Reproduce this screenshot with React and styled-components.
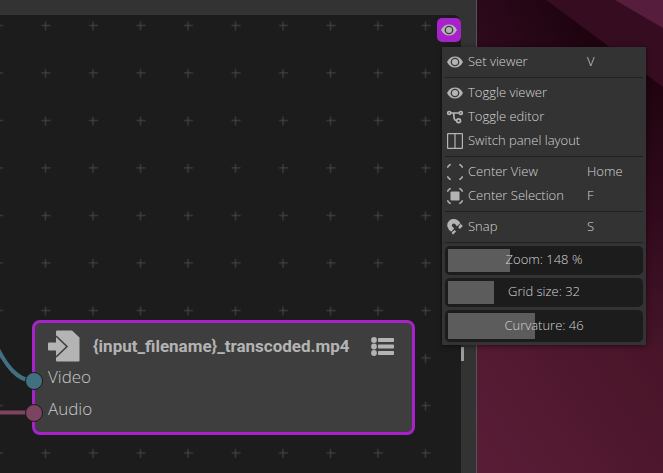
import React, { useState } from 'react';
import styled, { createGlobalStyle } from 'styled-components';

const GlobalStyle = createGlobalStyle`
  * {
    box-sizing: border-box;
  }
  body {
    margin: 0;
    background: #1c1c1c;
    font-family: "Open Sans", sans-serif;
  }
`

const Desktop = styled.div`
  position: relative;
  display: grid;
  grid-template-columns: minmax(0, 1fr) 186px;
  height: 100vh;
  overflow: hidden;
`
const EditorWindow = styled.main`
  display: grid;
  grid-template-columns: minmax(0, 1fr) 15px;
  grid-template-rows: 15px minmax(0, 1fr);
  border-right: 1px solid #555555;
  background: #333333;
  min-width: 0;
`
const TitleStrip = styled.header`
  grid-column: 1 / 3;
`
const Canvas = styled.section`
  position: relative;
  overflow: hidden;
  border-top-right-radius: 8px;
  background: #1c1c1c;
`
const CanvasDrawing = styled.svg`
  display: block;
  width: 100%;
  height: 100%;
`
const SplitBar = styled.div`
  padding-top: 332px;
`
const SplitHandle = styled.div`
  width: 3px;
  height: 14px;
  background: #9c9c9c;
`
const Wallpaper = styled.svg`
  display: block;
  width: 100%;
  height: 100%;
`

const Node = styled.article`
  position: absolute;
  left: 32px;
  top: 305px;
  width: 383px;
  height: 115px;
  padding: 6px 18px 0 13px;
  border: 3px solid #a722ca;
  border-radius: 8px;
  background: #3e3e3e;
  color: #b4b4b4;
`
const NodeHeader = styled.header`
  display: flex;
  align-items: center;
  gap: 13px;
  height: 34px;
`
const NodeTitle = styled.h2`
  flex: 1;
  margin: 0;
  font: 700 17px/24px "Roboto", sans-serif;
  white-space: nowrap;
`
const IconButton = styled.button`
  display: flex;
  padding: 0;
  border: 0;
  background: none;
  color: inherit;
`
const PortList = styled.ul`
  margin: 0;
  padding: 0;
  list-style: none;
`
const Port = styled.li`
  position: relative;
  height: 32px;
  color: #c8c8c8;
  font: 300 17px/28px "Open Sans", sans-serif;

  &::before {
    content: "";
    position: absolute;
    left: -23px;
    top: 9px;
    width: 16px;
    height: 16px;
    border: 1px solid #1c1c1c;
    border-radius: 50%;
    background: ${props => props.$color};
  }
`

const ViewerButton = styled.button`
  position: absolute;
  right: 202px;
  top: 18px;
  display: flex;
  align-items: center;
  justify-content: center;
  width: 24px;
  height: 24px;
  padding: 0;
  border: 0;
  border-radius: 5px;
  background: #a722ca;
  color: #b4b4b4;
`
const Menu = styled.div`
  position: absolute;
  right: 17px;
  top: 47px;
  width: 204px;
  padding: 3px;
  background: #333333;
  box-shadow: 0 1px 5px rgba(0, 0, 0, 0.5);
  color: #b4b4b4;
  font-size: 13px;
  font-weight: 300;
`
const MenuItem = styled.button`
  display: grid;
  grid-template-columns: 21px 119px 1fr;
  align-items: center;
  width: 100%;
  height: 24px;
  padding: 0 2px;
  border: 0;
  background: none;
  color: inherit;
  font: inherit;
  line-height: 20px;
  text-align: left;
  white-space: nowrap;
`
const MenuText = styled.span`
  padding-bottom: 2px;
  color: #d4d4d4;
`
const Shortcut = styled.kbd`
  padding-bottom: 2px;
  color: #d4d4d4;
  font: inherit;
`
const Separator = styled.hr`
  height: 1px;
  margin: 3px 0;
  border: 0;
  background: #202020;
`
const Sliders = styled.div`
  display: grid;
  gap: 3px;
`
const SliderLabel = styled.label`
  display: grid;
  height: ${props => props.$tall ? 32 : 29}px;
  padding: 3px;
  border-radius: 5px;
  background: #1c1c1c;
`
const SliderText = styled.span`
  grid-area: 1 / 1;
  z-index: 1;
  align-self: center;
  padding-bottom: 3px;
  color: #d4d4d4;
  line-height: 20px;
  text-align: center;
  pointer-events: none;
`
const SliderInput = styled.input`
  grid-area: 1 / 1;
  appearance: none;
  width: 100%;
  height: 100%;
  margin: 0;
  background: linear-gradient(#5c5c5c, #5c5c5c) no-repeat;

  &::-webkit-slider-thumb {
    appearance: none;
    width: 1px;
    height: 1px;
  }
`

const EyeIcon = () => (
  <svg width="16" height="16" viewBox="0 0 16 16" aria-hidden="true">
    <path d="M0 8C2 4.300 4.800 2.500 8 2.500S14 4.300 16 8C14 11.700 11.200 13.500 8 13.500S2 11.700 0 8Z" fill="currentColor" />
    <circle cx="8" cy="8" r="3.700" fill="none" stroke="#3a3a3a" strokeWidth="1.300" />
  </svg>
)
const NodesIcon = () => (
  <svg width="16" height="16" viewBox="0 0 16 16" fill="none" stroke="currentColor" strokeWidth="1.700" aria-hidden="true">
    <circle cx="2.200" cy="4" r="1.500" />
    <circle cx="13.800" cy="4" r="1.500" />
    <circle cx="11.600" cy="11.800" r="1.900" />
    <path d="M3.800 4H12.200M6.500 4C7.500 6 5.500 11.500 9.700 11.500" />
  </svg>
)
const PanelsIcon = () => (
  <svg width="16" height="16" viewBox="0 0 16 16" fill="none" stroke="currentColor" strokeWidth="1.200" aria-hidden="true">
    <rect x="0.600" y="0.600" width="14.800" height="14.800" rx="0.500" />
    <path d="M8 1V15" />
  </svg>
)
const FrameIcon = ({ filled }) => (
  <svg width="16" height="16" viewBox="0 0 16 16" fill="none" stroke="currentColor" strokeWidth="1.500" aria-hidden="true">
    <path d="M.8 3.800V2.800L2.800.8H3.800M12.200.8H13.200L15.200 2.800V3.800M15.200 12.200V13.200L13.200 15.200H12.200M3.800 15.200H2.800L.8 13.200V12.200" />
    {filled && <rect x="3.500" y="3.500" width="9" height="9" rx="1" fill="currentColor" stroke="none" />}
  </svg>
)
const MagnetIcon = () => (
  <svg width="16" height="16" viewBox="0 0 16 16" fill="none" stroke="currentColor" aria-hidden="true">
    <path d="M11.800 6.800C10.800 2.700 6.500 1 4 3.300C1.500 5.600 2.300 9 6 11.300" strokeWidth="4.600" />
    <path d="M3.800 13.400L7.300 10.300M10 7.500L13.400 4.600" stroke="#333333" strokeWidth="0.900" />
    <path d="M6 12.400L7.600 14M12.600 6.800L14.300 8.500" strokeWidth="4.200" />
  </svg>
)
const OutputIcon = () => (
  <svg width="32" height="32" viewBox="0 0 32 32" aria-hidden="true">
    <path d="M9 .5H24L31.500 7.500V30.500Q31.500 31.500 30.500 31.500H9Q8 31.500 8 30.500V1.500Q8 .5 9 .5Z" fill="currentColor" />
    <path d="M8 6L19 16.500L8 27" fill="none" stroke="#3e3e3e" strokeWidth="1.600" />
    <path d="M0 13.500Q0 12.500 1 12.500H9V20.500H1Q0 20.500 0 19.500Z" fill="currentColor" />
  </svg>
)
const ListIcon = () => (
  <svg width="23" height="19" viewBox="0 0 23 19" fill="currentColor" aria-hidden="true">
    {[3, 9.5, 16].map(y => (
      <g key={y}>
        <circle cx="3" cy={y} r="2.900" />
        <rect x="7" y={y - 2} width="16" height="4" rx="0.800" />
      </g>
    ))}
  </svg>
)

const menuGroups = [
  [{ label: 'Set viewer', icon: <EyeIcon />, shortcut: 'V' }],
  [
    { label: 'Toggle viewer', icon: <EyeIcon /> },
    { label: 'Toggle editor', icon: <NodesIcon /> },
    { label: 'Switch panel layout', icon: <PanelsIcon /> },
  ],
  [
    { label: 'Center View', icon: <FrameIcon />, shortcut: 'Home' },
    { label: 'Center Selection', icon: <FrameIcon filled />, shortcut: 'F' },
  ],
  [{ label: 'Snap', icon: <MagnetIcon />, shortcut: 'S' }],
]

function Slider({ label, unit = '', initial, min, max, tall }) {
  const [value, setValue] = useState(initial);
  const percent = (value - min) / (max - min) * 100;

  return (
    <SliderLabel $tall={tall}>
      <SliderText>{label}: {value}{unit}</SliderText>
      <SliderInput
        type="range"
        min={min}
        max={max}
        value={value}
        onChange={e => setValue(Number(e.target.value))}
        style={{ backgroundSize: `${percent}% 100%` }}
      />
    </SliderLabel>
  )
}

function App() {
  return (
    <Desktop>
      <GlobalStyle />
      <EditorWindow>
        <TitleStrip />
        <Canvas>
          <CanvasDrawing aria-hidden="true">
            <defs>
              <pattern id="grid" x="22" y="-13" width="47.500" height="47.500" patternUnits="userSpaceOnUse">
                <path d="M19.500 23.500H28.500M23.500 19.500V28.500" stroke="#484848" />
              </pattern>
            </defs>
            <rect width="100%" height="100%" fill="url(#grid)" />
            <path d="M-6 326C6 352 18 366 34 366" fill="none" stroke="#427083" strokeWidth="4" />
            <path d="M0 397.500H34" stroke="#7c4460" strokeWidth="4" />
          </CanvasDrawing>
          <Node>
            <NodeHeader>
              <OutputIcon />
              <NodeTitle>{'{input_filename}_transcoded.mp4'}</NodeTitle>
              <IconButton aria-label="Node options"><ListIcon /></IconButton>
            </NodeHeader>
            <PortList>
              <Port $color="#427083">Video</Port>
              <Port $color="#7c4460">Audio</Port>
            </PortList>
          </Node>
        </Canvas>
        <SplitBar>
          <SplitHandle />
        </SplitBar>
      </EditorWindow>

      <Wallpaper viewBox="0 0 186 473" preserveAspectRatio="none" aria-hidden="true">
        <defs>
          <linearGradient id="shade" gradientUnits="userSpaceOnUse" x1="0" y1="60" x2="90" y2="10">
            <stop offset="0" stopColor="#300a1e" />
            <stop offset="1" stopColor="#1f0410" />
          </linearGradient>
          <linearGradient id="fade" gradientUnits="userSpaceOnUse" x1="0" y1="80" x2="0" y2="345">
            <stop offset="0" stopColor="#20040f" />
            <stop offset="0.500" stopColor="#300a1c" />
            <stop offset="1" stopColor="#451429" />
          </linearGradient>
          <linearGradient id="floor" gradientUnits="userSpaceOnUse" x1="0" y1="473" x2="186" y2="345">
            <stop offset="0" stopColor="#5a1d37" />
            <stop offset="1" stopColor="#481428" />
          </linearGradient>
        </defs>
        <rect width="186" height="473" fill="url(#floor)" />
        <path d="M0 0H186V320H0Z" fill="url(#shade)" />
        <path d="M160 70H186V345H160Z" fill="url(#fade)" />
        <path d="M69 0H186V87L130 45Z" fill="#360d20" />
        <path d="M138 0H186V28Z" fill="#571d3d" />
      </Wallpaper>

      <ViewerButton aria-label="Viewer menu"><EyeIcon /></ViewerButton>
      <Menu>
        {menuGroups.map((group, index) => (
          <React.Fragment key={index}>
            {group.map(item => (
              <MenuItem key={item.label}>
                {item.icon}
                <MenuText>{item.label}</MenuText>
                {item.shortcut && <Shortcut>{item.shortcut}</Shortcut>}
              </MenuItem>
            ))}
            <Separator />
          </React.Fragment>
        ))}
        <Sliders>
          <Slider label="Zoom" unit=" %" initial={148} min={0} max={458} />
          <Slider label="Grid size" initial={32} min={8} max={108} />
          <Slider label="Curvature" initial={46} min={0} max={101} tall />
        </Sliders>
      </Menu>
    </Desktop>
  )
}

export default App
